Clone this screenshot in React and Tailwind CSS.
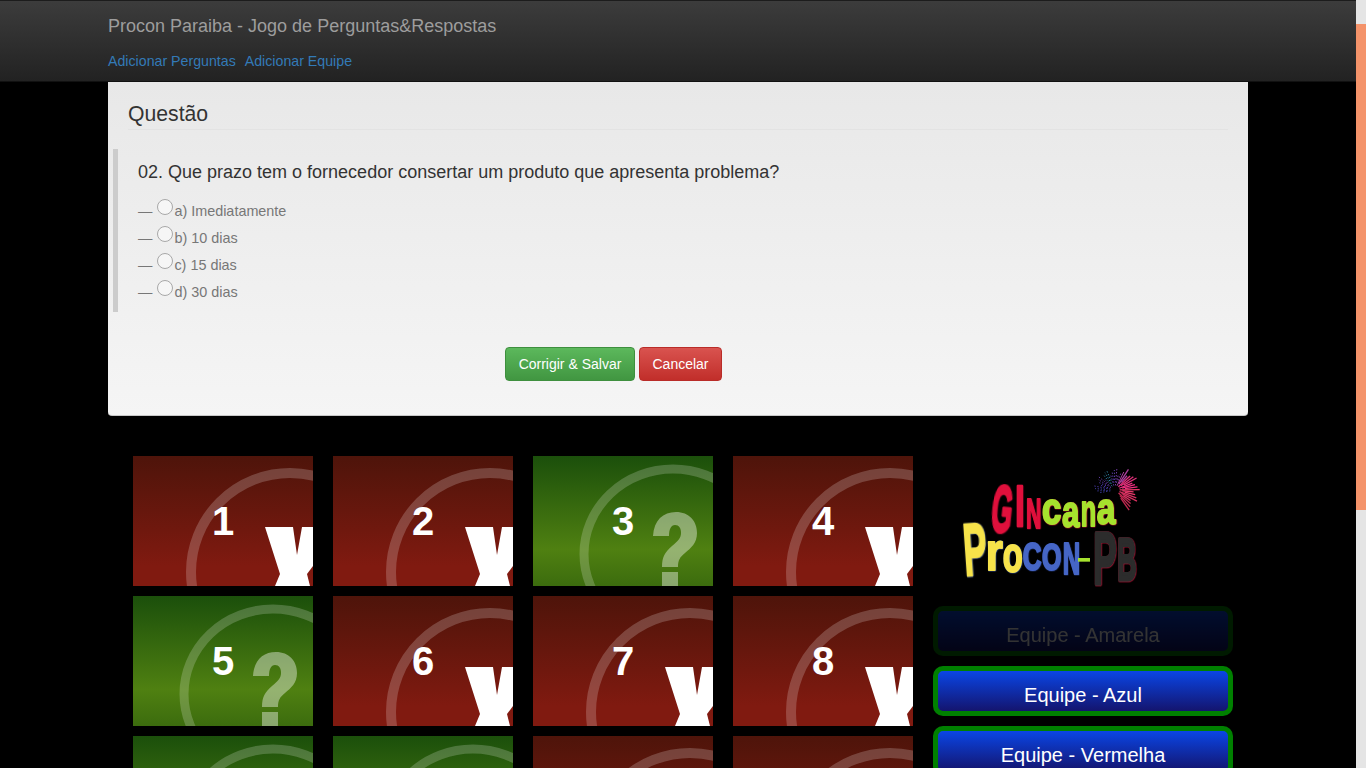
const FONT = { fontFamily: '"Liberation Sans", Arial, sans-serif' };

function XMark() {
  return (
    <svg className="absolute inset-0" width="180" height="130" viewBox="0 0 180 130">
      <ellipse cx="157" cy="116" rx="99" ry="99" fill="none" stroke="#ffffff" strokeOpacity="0.2" strokeWidth="10" />
      <polygon fill="#ffffff" points="132,71 160,71 164,99 169,71 180,71 180,110 174,118 177,130 142,130 147,118" />
    </svg>
  );
}

function QMark() {
  return (
    <svg className="absolute inset-0" width="180" height="130" viewBox="0 0 180 130">
      <ellipse cx="140" cy="98" rx="89" ry="85" fill="none" stroke="#ffffff" strokeOpacity="0.2" strokeWidth="9" />
      <g fill="#ffffff" fillOpacity="0.4">
        <path d="M120,80 C121,64 130,56 143,56 C156,56 164,65 164,77 C164,87 158,92 152,97 C147,101 145,104 145,111 L129,111 C129,101 132,96 139,90 C145,85 148,82 148,77 C148,72 146,69 142,69 C138,69 136,73 136,80 Z" />
        <rect x="129" y="116" width="16" height="14" />
      </g>
    </svg>
  );
}

function Card({ n, ok }) {
  return (
    <div
      className={
        "relative w-[180px] h-[130px] overflow-hidden flex items-center justify-center " +
        (ok
          ? "bg-[linear-gradient(to_bottom,#1b4f0b_0%,#4f8011_72%,#3c6c0e_100%)]"
          : "bg-[linear-gradient(to_bottom,#4e140a_0%,#801a10_85%,#801a10_100%)]")
      }
    >
      {ok ? <QMark /> : <XMark />}
      <span className="relative text-white font-bold text-[40px] leading-none" style={FONT}>{n}</span>
    </div>
  );
}

function Team({ name, dim }) {
  return (
    <div
      className={
        "w-[300px] h-[50px] rounded-[10px] border-[5px] border-[#008000] pt-2 flex items-center justify-center text-[20px] text-white bg-[linear-gradient(to_bottom,#0a46e6,#14146e)] " +
        (dim ? "opacity-20" : "")
      }
    >
      {name}
    </div>
  );
}

function Opt({ t }) {
  return (
    <div className="flex h-[27px] items-center text-[14.4px] text-[#777777]">
      <span className="mr-[5px]">—</span>
      <span className="w-[16px] h-[16px] rounded-full border border-[#a8a8a8] bg-[#f6f6f6] -mt-[9px] mr-px shrink-0" />
      <span>{t}</span>
    </div>
  );
}

function G({ c, x0, x1, y0, y1, fill, shadow, rot = 0, low = false, sw = 6, off = "1px 1.5px" }) {
  const size = (y1 - y0) / (low ? 0.54 : 0.716);
  return (
    <text
      x={x0}
      y={y1}
      fontSize={size}
      fontWeight="bold"
      fontFamily='"Liberation Sans", sans-serif'
      fill={fill}
      stroke={fill}
      strokeWidth={sw}
      strokeLinejoin="round"
      textLength={x1 - x0}
      lengthAdjust="spacingAndGlyphs"
      transform={rot ? `rotate(${rot} ${(x0 + x1) / 2} ${(y0 + y1) / 2})` : undefined}
      style={{ filter: `drop-shadow(${off} 0 ${shadow})` }}
    >
      {c}
    </text>
  );
}

function Fireworks() {
  const rays = [];
  const cols = ["#3d3a9e", "#4a3aa8", "#6a3fb0", "#2d7fa0", "#5a3fa8", "#7a3fb0", "#b03fa0", "#e0307a", "#f02f80", "#e8386a", "#d83060", "#c02850"];
  for (let i = 0; i < 36; i++) {
    const a = (-190 + i * 7) * (Math.PI / 180);
    const r0 = 14 + (i % 3) * 8;
    const r1 = 48 + (i % 4) * 6 + (i > 18 ? 8 : 0);
    rays.push(
      <line
        key={i}
        x1={525 + Math.cos(a) * r0}
        y1={105 + Math.sin(a) * r0}
        x2={525 + Math.cos(a) * r1}
        y2={105 + Math.sin(a) * r1}
        stroke={cols[Math.floor(i / 3)]}
        strokeWidth={i > 18 ? 4 : 3}
        strokeDasharray={i < 18 ? "4 5" : undefined}
      />
    );
  }
  return <g>{rays}</g>;
}

function Logo() {
  return (
    <svg width="300" height="150" viewBox="-21 3 900 450" className="block shrink-0">
      <Fireworks />
      <G c="G" x0={156} x1={218} y0={88} y1={232} fill="#e0103c" shadow="#8a0a28" rot={6} sw={9} />
      <G c="I" x0={226} x1={254} y0={88} y1={212} fill="#e0103c" shadow="#8a0a28" sw={8} />
      <G c="N" x0={258} x1={304} y0={128} y1={220} fill="#e0103c" shadow="#8a0a28" />
      <G c="c" x0={306} x1={364} y0={135} y1={206} fill="#a6e22e" shadow="#e0103c" low />
      <G c="a" x0={366} x1={418} y0={143} y1={216} fill="#a6e22e" shadow="#e0103c" low />
      <G c="n" x0={422} x1={468} y0={143} y1={214} fill="#a6e22e" shadow="#e0103c" low />
      <G c="a" x0={470} x1={526} y0={135} y1={206} fill="#a6e22e" shadow="#e0103c" low />
      <G c="P" x0={70} x1={140} y0={202} y1={360} fill="#f7e34a" shadow="#3f62c0" rot={-4} sw={8} />
      <G c="r" x0={137} x1={188} y0={258} y1={344} fill="#f7e34a" shadow="#3f62c0" low />
      <G c="o" x0={188} x1={248} y0={268} y1={350} fill="#f7e34a" shadow="#3f62c0" low />
      <G c="C" x0={248} x1={304} y0={264} y1={346} fill="#4666c6" shadow="#26408f" />
      <G c="O" x0={306} x1={364} y0={268} y1={346} fill="#4666c6" shadow="#26408f" />
      <G c="N" x0={368} x1={420} y0={264} y1={358} fill="#4666c6" shadow="#26408f" />
      <rect x="414" y="309" width="36" height="11" fill="#a6e22e" />
      <G c="P" x0={460} x1={530} y0={227} y1={386} fill="#2c2c2c" shadow="#e0103c" sw={10} off="1.5px 1px" />
      <G c="B" x0={532} x1={590} y0={247} y1={374} fill="#2c2c2c" shadow="#e0103c" sw={10} off="1.5px 1px" />
    </svg>
  );
}

export default function App() {
  return (
    <div className="h-screen overflow-hidden flex bg-black" style={FONT}>
      <div className="flex-1 min-w-0">
        <nav className="h-[82px] border-t border-b border-t-[#1c1c1c] border-b-[#111111] bg-[linear-gradient(to_bottom,#3c3c3c,#222222)]">
          <div className="w-[1140px] mx-auto">
            <div className="h-[50px] flex items-center text-[18px] text-[#9d9d9d]">Procon Paraiba - Jogo de Perguntas&amp;Respostas</div>
            <div className="flex gap-[9px] text-[14.2px] text-[#337ab7] h-[20px] mt-px items-center">
              <span>Adicionar Perguntas</span>
              <span>Adicionar Equipe</span>
            </div>
          </div>
        </nav>
        <div className="w-[1140px] mx-auto">
          <section className="h-[334px] rounded-b bg-[linear-gradient(to_bottom,#e8e8e8,#f5f5f5)] border-b border-[#c8c8c8] px-[5px]">
            <div className="mx-[15px] h-[48px] pt-[16px] border-b border-[#e3e3e3] flex items-center text-[21.2px] text-[#333333]">Questão</div>
            <div className="mt-[19px] h-[163px] border-l-[5px] border-[#cccccc] pl-[20px] pt-[11px]">
              <p className="text-[18px] leading-[25px] text-[#333333] mb-[13px]">02. Que prazo tem o fornecedor consertar um produto que apresenta problema?</p>
              <Opt t="a) Imediatamente" />
              <Opt t="b) 10 dias" />
              <Opt t="c) 15 dias" />
              <Opt t="d) 30 dias" />
            </div>
            <div className="mt-[35px] ml-[392px] flex gap-[4px] text-[14px] text-white">
              <button className="w-[130px] h-[34px] rounded border border-[#3e8f3e] bg-[linear-gradient(to_bottom,#5cb85c,#419641)]">Corrigir &amp; Salvar</button>
              <button className="w-[83px] h-[34px] rounded border border-[#b92c28] bg-[linear-gradient(to_bottom,#d9534f,#c12e2a)]">Cancelar</button>
            </div>
          </section>
          <div className="mt-[40px] ml-[25px] flex gap-[20px]">
            <div className="grid grid-cols-[repeat(4,180px)] gap-x-[20px] gap-y-[10px] content-start">
              <Card n={1} />
              <Card n={2} />
              <Card n={3} ok />
              <Card n={4} />
              <Card n={5} ok />
              <Card n={6} />
              <Card n={7} />
              <Card n={8} />
              <Card n={9} ok />
              <Card n={10} ok />
              <Card n={11} />
              <Card n={12} />
            </div>
            <div className="flex flex-col">
              <Logo />
              <div className="flex flex-col gap-[10px]">
                <Team name="Equipe - Amarela" dim />
                <Team name="Equipe - Azul" />
                <Team name="Equipe - Vermelha" />
              </div>
            </div>
          </div>
        </div>
      </div>
      <div className="w-[10px] shrink-0 h-screen bg-[#e5e5e5] pt-[24px]">
        <div className="h-[486px] bg-[#f4936a]" />
      </div>
    </div>
  );
}
